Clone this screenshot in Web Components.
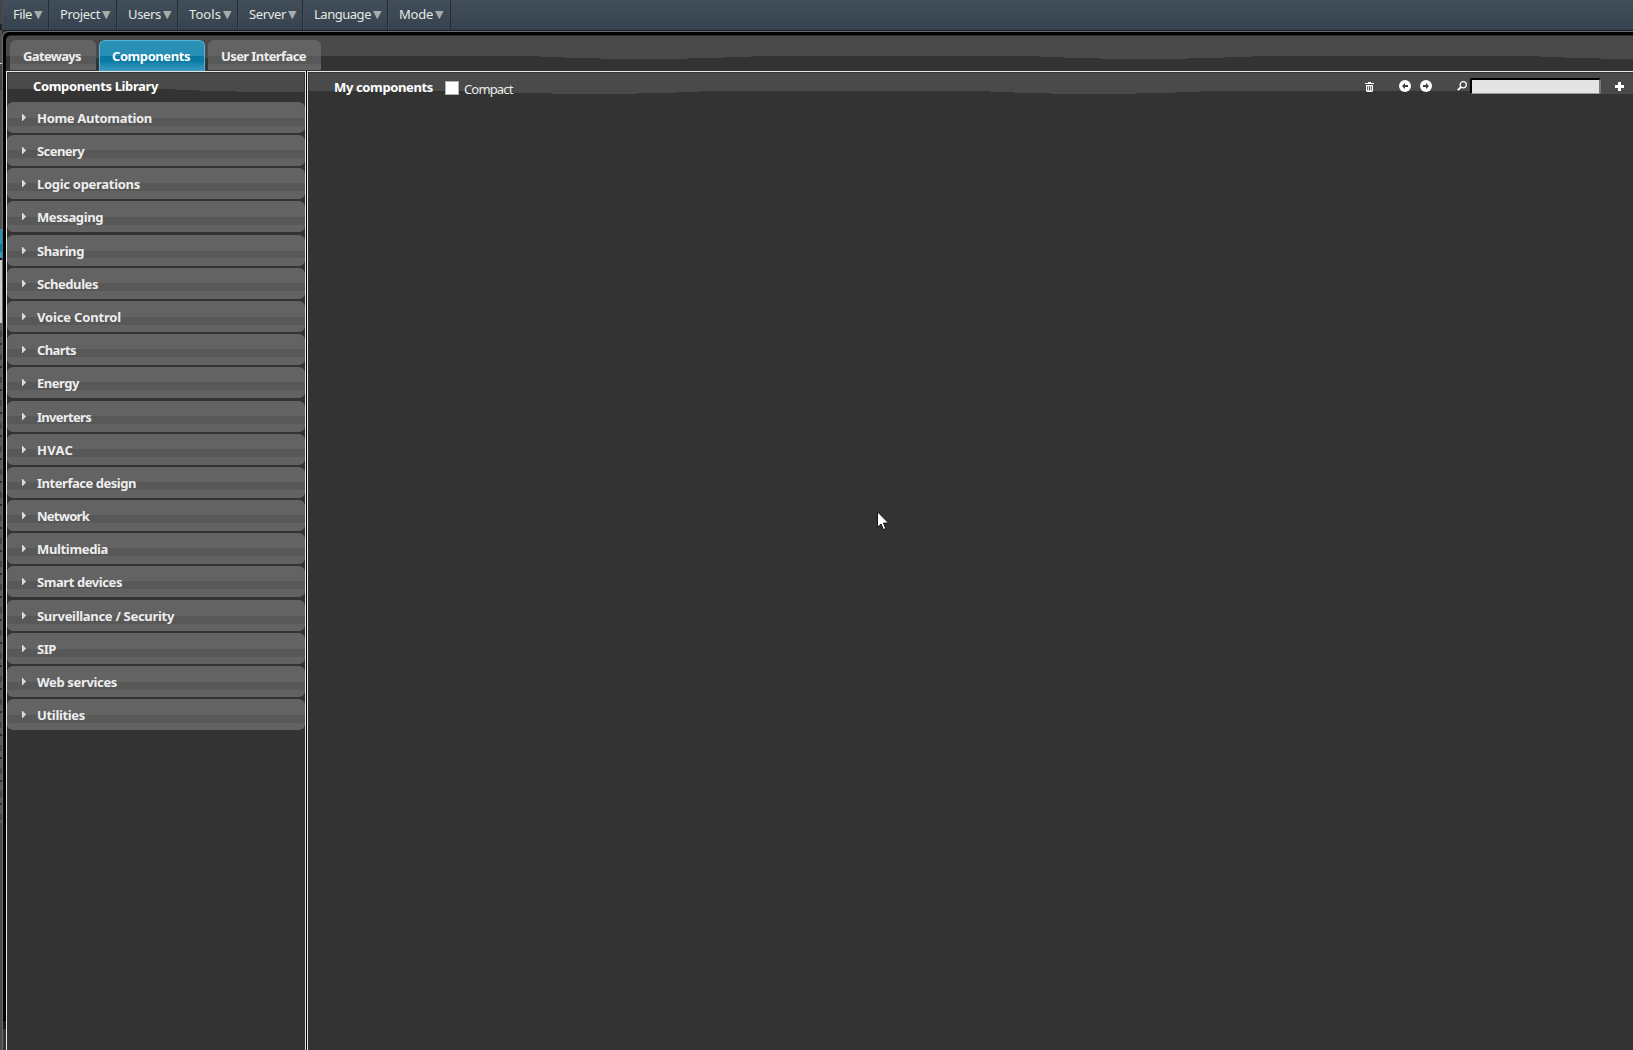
<!DOCTYPE html>
<html lang="en">
<head>
<meta charset="utf-8">
<title>Components</title>
<style>
  html, body {
    margin: 0;
    height: 100%;
    overflow: hidden;
    background: #333;
    color: #fff;
    font-family: "Noto Sans", "Open Sans", sans-serif;
    font-size: 13px;
  }
</style>
</head>
<body>
<app-window></app-window>

<script>
// Text with a fixed width, spread through letter-spacing
class FitLabel extends HTMLElement {
  constructor() {
    super();
    this.attachShadow({ mode: 'open' });
    this.shadowRoot.innerHTML = `
      <style>
        :host { display: inline-block; white-space: nowrap; flex: none; }
        span { display: inline-block; }
      </style>
      <span><slot></slot></span>
    `;
  }

  connectedCallback() {
    const target = Number(this.getAttribute('width'));
    const span = this.shadowRoot.querySelector('span');
    const count = this.textContent.length;
    const natural = span.getBoundingClientRect().width;
    if (natural > 0) {
      span.style.letterSpacing = ((target - natural) / count) + 'px';
    }
    this.style.width = target + 'px';
  }
}

// Stepped two-tone header background, repeats every 500px
class WaveBand extends HTMLElement {
  constructor() {
    super();
    this.attachShadow({ mode: 'open' });
  }

  connectedCallback() {
    const b = Number(this.getAttribute('base'));
    const phase = this.getAttribute('phase');
    this.shadowRoot.innerHTML = `
      <style>
        :host { display: block; position: absolute; inset: 0; z-index: -1; overflow: hidden; }
        svg { display: block; width: 100%; height: 40px; }
      </style>
      <svg shape-rendering="crispEdges">
        <defs>
          <pattern id="wave" x="${phase}" y="0" width="500" height="40" patternUnits="userSpaceOnUse">
            <path fill="#4a4a4a" d="M0 0H500V${b}H211V${b + 1}H185V${b + 2}H147V${b + 3}H61V${b + 2}H24V${b + 1}H0Z"/>
          </pattern>
        </defs>
        <rect width="100%" height="40" fill="url(#wave)"/>
      </svg>
    `;
  }
}

class MenuItem extends HTMLElement {
  constructor() {
    super();
    this.attachShadow({ mode: 'open' });
  }

  connectedCallback() {
    this.shadowRoot.innerHTML = `
      <style>
        :host {
          display: flex;
          box-sizing: border-box;
          width: ${this.getAttribute('size')}px;
          height: 30px;
          padding-left: 11px;
          line-height: 28px;
          color: #e4e9e4;
          border-right: 1px solid #222d38;
          box-shadow: inset 1px 0 #414d59;
        }
        i {
          margin-left: 2px;
          font: 11px/30px "DejaVu Sans", sans-serif;
          color: #a4adac;
        }
      </style>
      <fit-label width="${this.getAttribute('text')}">${this.getAttribute('label')}</fit-label><i>▼</i>
    `;
  }
}

class MenuBar extends HTMLElement {
  constructor() {
    super();
    this.attachShadow({ mode: 'open' });
    this.shadowRoot.innerHTML = `
      <style>
        :host {
          display: flex;
          height: 30px;
          background: linear-gradient(#424e5a, #36424e);
          border-bottom: 1px solid #17202b;
        }
      </style>
      <menu-item label="File" text="19" size="47"></menu-item>
      <menu-item label="Project" text="40" size="68"></menu-item>
      <menu-item label="Users" text="33" size="61"></menu-item>
      <menu-item label="Tools" text="32" size="60"></menu-item>
      <menu-item label="Server" text="37" size="65"></menu-item>
      <menu-item label="Language" text="57" size="85"></menu-item>
      <menu-item label="Mode" text="34" size="63"></menu-item>
    `;
  }
}

class TabItem extends HTMLElement {
  constructor() {
    super();
    this.attachShadow({ mode: 'open' });
  }

  connectedCallback() {
    this.shadowRoot.innerHTML = `
      <style>
        :host {
          display: block;
          box-sizing: border-box;
          width: ${this.getAttribute('size')}px;
          height: 30px;
          padding-left: 13px;
          border-radius: 6px 6px 0 0;
          background: linear-gradient(#636363 0 16px, #585858 16px 24px, #626262 24px);
          color: #eee;
          font-weight: bold;
          line-height: 32px;
        }
        :host([active]) {
          height: 31px;
          padding-left: 12px;
          line-height: 30px;
          border: 1px solid #55b4d3;
          border-bottom: 0;
          background: linear-gradient(#2990b5 0 15px, #0779a6 15px 20px, #1c86ad 23px, #3a9abc);
          color: #fff;
        }
      </style>
      <fit-label width="${this.getAttribute('text')}">${this.getAttribute('label')}</fit-label>
    `;
  }
}

class TabBar extends HTMLElement {
  constructor() {
    super();
    this.attachShadow({ mode: 'open' });
    this.shadowRoot.innerHTML = `
      <style>
        :host {
          display: flex;
          position: relative;
          z-index: 0;
          box-sizing: border-box;
          height: 35px;
          padding: 4px 0 0 4px;
          gap: 3px;
          border-top-left-radius: 5px;
          overflow: hidden;
        }
      </style>
      <wave-band base="20" phase="34"></wave-band>
      <tab-item label="Gateways" text="58" size="86"></tab-item>
      <tab-item label="Components" text="78" size="106" active></tab-item>
      <tab-item label="User Interface" text="85" size="113"></tab-item>
    `;
  }
}

class LibraryGroup extends HTMLElement {
  constructor() {
    super();
    this.attachShadow({ mode: 'open' });
  }

  connectedCallback() {
    this.shadowRoot.innerHTML = `
      <style>
        :host {
          display: flex;
          align-items: flex-start;
          height: 31px;
          margin-bottom: 2.18px;
          padding-left: 15px;
          border-radius: 6px;
          background: linear-gradient(#636363 0 15.5px, #585858 15.5px 23.5px, #626262 23.5px);
          color: #eee;
          font-weight: bold;
          line-height: 32px;
        }
        svg { flex: none; margin: 12px 11px 0 0; }
      </style>
      <svg width="4" height="7" viewBox="0 0 4 7"><path d="M0 0H.7L4 3.5L.7 7H0Z" fill="#dcdcdc"/></svg>
      <fit-label width="${this.getAttribute('text')}">${this.getAttribute('label')}</fit-label>
    `;
  }
}

const GROUPS = [
  ['Home Automation', 115],
  ['Scenery', 47],
  ['Logic operations', 103],
  ['Messaging', 66],
  ['Sharing', 47],
  ['Schedules', 61],
  ['Voice Control', 84],
  ['Charts', 39],
  ['Energy', 42],
  ['Inverters', 54],
  ['HVAC', 36],
  ['Interface design', 99],
  ['Network', 52],
  ['Multimedia', 71],
  ['Smart devices', 85],
  ['Surveillance / Security', 137],
  ['SIP', 19],
  ['Web services', 80],
  ['Utilities', 48]
];

class ComponentsLibrary extends HTMLElement {
  constructor() {
    super();
    this.attachShadow({ mode: 'open' });
    this.shadowRoot.innerHTML = `
      <style>
        :host {
          display: block;
          box-sizing: border-box;
          width: 300px;
          background: #333;
          border: 1px solid #e6e6e6;
          border-bottom: 0;
        }
        header {
          position: relative;
          z-index: 0;
          height: 28.97px;
          margin: 1px 1px 0;
          padding-left: 25px;
          font-weight: bold;
          line-height: 27px;
        }
      </style>
      <header>
        <wave-band base="16" phase="167"></wave-band>
        <fit-label width="125">Components Library</fit-label>
      </header>
      ${GROUPS.map(([label, width]) => `<library-group label="${label}" text="${width}"></library-group>`).join('')}
    `;
  }
}

class WorkArea extends HTMLElement {
  constructor() {
    super();
    this.attachShadow({ mode: 'open' });
    this.shadowRoot.innerHTML = `
      <style>
        :host {
          display: block;
          flex: 1;
          background: #333;
          border: 1px solid #e6e6e6;
          border-width: 1px 0 0 1px;
        }
        header {
          display: flex;
          align-items: flex-start;
          position: relative;
          z-index: 0;
          height: 29px;
          margin: 1px 0 0 1px;
          padding: 0 9px 0 25px;
        }
        .title { font-weight: bold; line-height: 29px; }
        .check {
          box-sizing: border-box;
          width: 14px;
          height: 14px;
          margin: 8px 5px 0 12px;
          background: #fff;
          border: 1px solid #b0b0b0;
        }
        .compact { line-height: 32px; color: #eee; }
        .tools { display: flex; margin-left: auto; }
        svg { display: block; flex: none; }
        .search {
          box-sizing: border-box;
          width: 131px;
          height: 16px;
          margin: 5px 14px 0 3px;
          background: #e4e4e4;
          border: 2px solid #000;
          border-right-color: #777;
          border-bottom: 1px solid #999;
          border-radius: 2px;
        }
      </style>
      <header>
        <wave-band base="18" phase="181"></wave-band>
        <fit-label class="title" width="99">My components</fit-label>
        <div class="check"></div>
        <fit-label class="compact" width="48.5">Compact</fit-label>
        <div class="tools">
          <svg width="9" height="10" viewBox="0 0 9 10" style="margin:9px 25px 0 0">
            <path fill="#fff" d="M3 0H6V1H9V2H0V1H3ZM1 3H8V9L7 10H2L1 9Z"/>
            <path stroke="#4a4a4a" stroke-width=".9" d="M2.7 4V8.5M4.5 4V8.5M6.3 4V8.5"/>
          </svg>
          <svg width="12" height="12" viewBox="0 0 12 12" style="margin:7px 9px 0 0">
            <circle cx="6" cy="6" r="6" fill="#fff"/>
            <path d="M3 6L6 3V5H9V7H6V9Z" fill="#3c3c3c"/>
          </svg>
          <svg width="12" height="12" viewBox="0 0 12 12" style="margin:7px 25px 0 0">
            <circle cx="6" cy="6" r="6" fill="#fff"/>
            <path d="M9 6L6 3V5H3V7H6V9Z" fill="#3c3c3c"/>
          </svg>
          <svg width="10" height="10" viewBox="0 0 10 10" style="margin:8px 0 0">
            <circle cx="6.2" cy="3.8" r="3.1" fill="none" stroke="#fff" stroke-width="1.3"/>
            <path d="M4 6L.8 9.2" stroke="#fff" stroke-width="1.8"/>
          </svg>
          <div class="search"></div>
          <svg width="9" height="9" viewBox="0 0 9 9" style="margin:9px 0 0">
            <path fill="#fff" d="M3 0H6V3H9V6H6V9H3V6H0V3H3Z"/>
          </svg>
        </div>
      </header>
    `;
  }
}

// Sliver of the window behind
class BackEdge extends HTMLElement {
  constructor() {
    super();
    this.attachShadow({ mode: 'open' });
    this.shadowRoot.innerHTML = `
      <style>
        :host {
          display: block;
          width: 2px;
          background:
            linear-gradient(#444 0 24px, #222 24px 30px, #505050 30px 63px, #ddd 63px 64px, #444 64px 90px,
              #525252 90px 229px, #2790b6 229px 244px, #0779a6 244px 252px, #3a9abc 252px 258px,
              #111 258px 260px, #ccc 260px 323px, transparent 323px 823px, #4a4a4a 823px),
            repeating-linear-gradient(#5a5a5a 0 9px, #464646 9px 15px, #5c5c5c 15px 21px, #2c2c2c 21px 23px);
        }
      </style>
    `;
  }
}

class AppWindow extends HTMLElement {
  constructor() {
    super();
    this.attachShadow({ mode: 'open' });
    this.shadowRoot.innerHTML = `
      <style>
        :host { display: flex; height: 100vh; overflow: hidden; }
        .main { display: flex; flex-direction: column; flex: 1; }
        .frame {
          display: flex;
          flex: 1;
          background: #6a6c6f;
          border-top-left-radius: 6px;
        }
        .black {
          display: flex;
          flex: 1;
          flex-direction: column;
          margin: 1px 0 0 1px;
          padding: 3px 0 0 3px;
          background: linear-gradient(#000 0 989px, #181818 989px 997px, #333 997px);
          border-top-left-radius: 6px;
        }
        .content {
          display: flex;
          flex: 1;
          flex-direction: column;
          border-top: 1px solid #2b2b2b;
          border-top-left-radius: 5px;
          background: #333;
        }
        .panes { display: flex; flex: 1; gap: 1px; background: #000; }
        .cursor { position: absolute; left: 877px; top: 511px; }
      </style>
      <back-edge></back-edge>
      <div class="main">
        <menu-bar></menu-bar>
        <div class="frame">
          <div class="black">
            <div class="content">
              <tab-bar></tab-bar>
              <div class="panes">
                <components-library></components-library>
                <work-area></work-area>
              </div>
            </div>
          </div>
        </div>
      </div>
      <svg class="cursor" width="13" height="20" viewBox="0 0 13 20">
        <path d="M.5 .8V16.3L4 13L6.4 18.6L8.8 17.6L6.5 12.1H11.6Z" fill="#fff" stroke="#111" stroke-width="1"/>
      </svg>
    `;
  }
}

customElements.define('fit-label', FitLabel);
customElements.define('wave-band', WaveBand);
customElements.define('menu-item', MenuItem);
customElements.define('menu-bar', MenuBar);
customElements.define('tab-item', TabItem);
customElements.define('tab-bar', TabBar);
customElements.define('library-group', LibraryGroup);
customElements.define('components-library', ComponentsLibrary);
customElements.define('work-area', WorkArea);
customElements.define('back-edge', BackEdge);
customElements.define('app-window', AppWindow);
</script>
</body>
</html>
